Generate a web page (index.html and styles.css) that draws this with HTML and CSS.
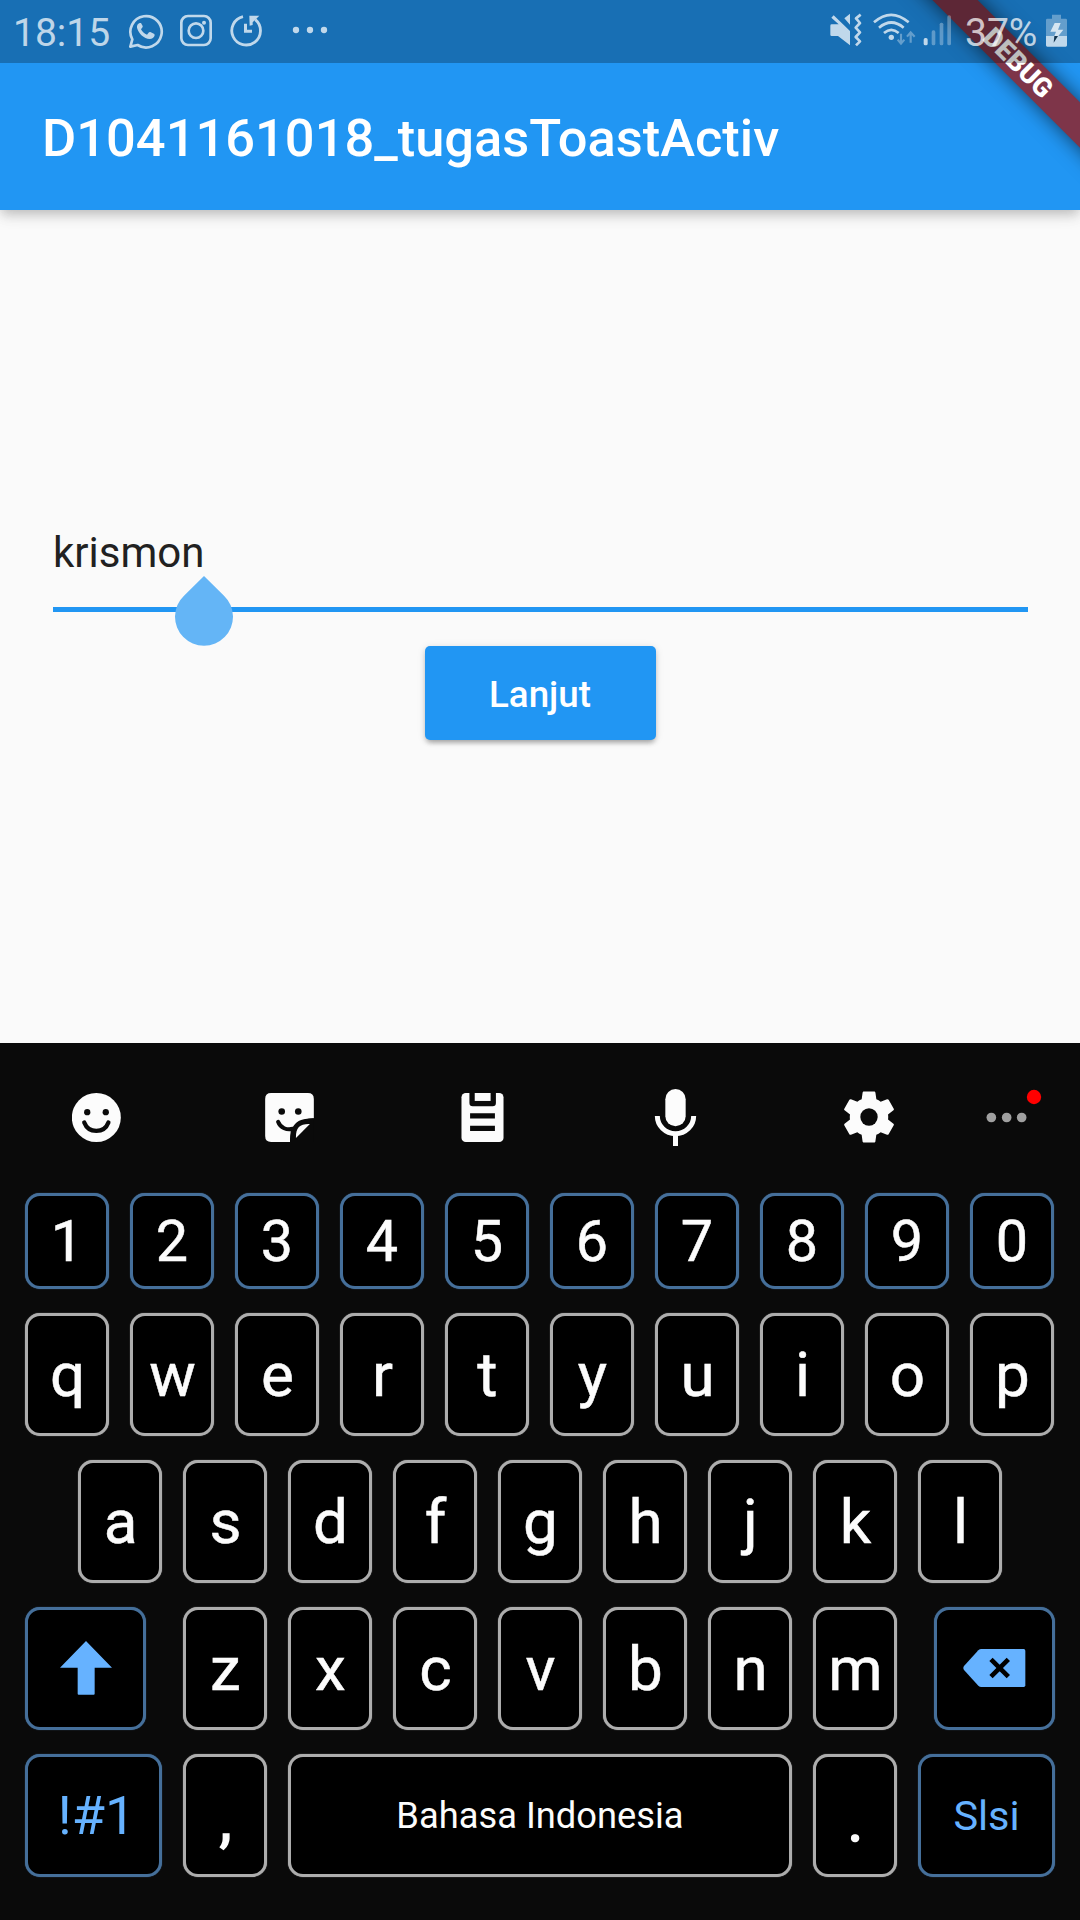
FILE: index.html
```html
<!DOCTYPE html>
<html lang="id">
<head>
<meta charset="utf-8">
<title>D1041161018_tugasToastActiv</title>
<link rel="stylesheet" href="styles.css">
</head>
<body>
<div class="screen">
  <header class="app-bar">
    <h1 class="app-title">D1041161018_tugasToastActiv</h1>
  </header>

  <div class="debug-corner">
    <div class="debug-banner">DEBUG</div>
  </div>

  <div class="status-bar">
    <span class="clock">18:15</span>
    <svg class="whatsapp" width="36" height="36" viewBox="384 39 108 108" fill="none"><path d="M391 140l6-22a47 47 0 1 1 16 17z" stroke="currentColor" stroke-width="8" stroke-linejoin="round"/><path d="M419 69c-6 2-9 8-8 14 4 17 21 33 38 34 7 0 14-4 15-11l-1-4-12-6-4 1-6 7c-8-3-14-9-18-16l5-7v-3l-5-9z" fill="currentColor"/></svg>
    <svg class="instagram" width="33" height="36" viewBox="540 39 99 108" fill="none" stroke="currentColor" stroke-width="8"><rect x="544" y="48" width="88" height="87" rx="20"/><circle cx="588" cy="92" r="22"/><circle cx="612" cy="68" r="6" fill="currentColor" stroke="none"/></svg>
    <svg class="timer" width="34" height="36" viewBox="687 39 102 108" fill="none"><path d="M729 50a43 43 0 1 0 37 9" stroke="currentColor" stroke-width="8.5"/><path d="M748 47h30l-20 20v8l-9 2zM732 71h9v18h15v9h-24z" fill="currentColor"/></svg>
    <svg class="more-notifications" width="36" height="36" viewBox="876 39 108 108" fill="currentColor"><circle cx="888" cy="90" r="9.5"/><circle cx="930" cy="90" r="9.5"/><circle cx="972" cy="90" r="9.5"/></svg>

    <div class="system-icons">
      <svg class="mute" width="35" height="36" viewBox="84 39 105 108" fill="none"><path d="M101 46l-7 7 22 20H95q-4 0-4 4v27q0 4 4 4h19l36 28V93zM133 55l17-14v33z" fill="currentColor"/><path d="M182 44l-14 11 12 14-13 14 13 14-13 14 13 13-12 12" stroke="currentColor" stroke-width="8" stroke-linejoin="round"/></svg>
      <svg class="wifi" width="45" height="36" viewBox="216 39 135 108" fill="none"><g stroke="currentColor" stroke-width="8"><path d="M222 67q51-45 104 0"/><path d="M237 83q37-31 74 0"/><path d="M252 99q22-19 44 0"/></g><circle cx="274" cy="112" r="8" fill="currentColor"/><path d="M303 101v28m-10-10l10 12 10-12M332 128V98m-11 12l11-13 12 13" stroke="currentColor" stroke-width="6.5" opacity=".45"/></svg>
      <svg class="signal" width="30" height="36" viewBox="366 39 90 108" fill="currentColor"><rect x="371" y="114" width="12" height="22" rx="5"/><g opacity=".42"><rect x="395" y="91" width="11" height="45" rx="5"/><rect x="419" y="68" width="11" height="68" rx="5"/><rect x="442" y="46" width="11" height="90" rx="5"/></g></svg>
      <span class="battery-level">37%</span>
      <svg class="battery" width="23" height="36" viewBox="735 39 69 108" fill="currentColor"><path d="M756 44h27v12h14q4 0 4 4v48h-63V60q0-4 4-4h14z" opacity=".45"/><path d="M738 108h63v28q0 4-4 4h-55q-4 0-4-4zM764 69h18l-8 20h16l-15 19h-12l5-13h-17z"/><path class="bolt-tip" d="M763 108h11l-13 20z"/></svg>
    </div>
  </div>

  <main class="content">
    <div class="name-field">
      <span class="name-value">krismon</span>
      <svg class="cursor-handle" width="58" height="70" viewBox="435 229 174 210"><path d="M522 229l60 59a87 87 0 1 1-120 0z" fill="#64b5f6"/></svg>
    </div>
    <button class="next-button" type="button">Lanjut</button>
  </main>

  <section class="keyboard">
    <div class="tools">
      <div class="tool"><svg width="49" height="49" viewBox="96 188 148 148"><circle cx="169.500" cy="262" r="74" fill="#fcfcfc"/><g fill="#0a0a0a"><circle cx="142" cy="246" r="9.500"/><circle cx="198" cy="246" r="9.500"/></g><path d="M133 277c13 34 60 34 73 0" fill="none" stroke="#0a0a0a" stroke-width="13" stroke-linecap="round"/></svg></div>
      <div class="tool"><svg width="49" height="49" viewBox="675 188 147 148"><path d="M693 188h111q18 0 18 18v58c-45 2-71 17-72 72h-57q-18 0-18-18V206q0-18 18-18z" fill="#fcfcfc"/><path d="M714 275c7 19 27 26 45 21" fill="none" stroke="#0a0a0a" stroke-width="12" stroke-linecap="round"/><path d="M822 264c-40 0-56 10-65 31l-5 9-2 32h72z" fill="#0a0a0a"/><path d="M810 282c-29-1-43 9-42 42z" fill="#fcfcfc"/><g fill="#0a0a0a"><circle cx="725" cy="244" r="10"/><circle cx="775" cy="244" r="10"/></g></svg></div>
      <div class="tool"><svg width="43" height="49" viewBox="1263 188 129 148"><rect x="1264" y="188" width="127" height="148" rx="13" fill="#fcfcfc"/><path d="M1288 187h80v31q0 10-10 10h-60q-10 0-10-10zM1290 249h75v16h-75zM1290 287h75v16h-75z" fill="#0a0a0a"/><path d="M1304 188h48v24h-48z" fill="#fcfcfc"/></svg></div>
      <div class="tool"><svg width="43" height="57" viewBox="102 177 129 171"><rect x="136" y="177" width="61" height="112" rx="30.500" fill="#fcfcfc"/><path d="M112 258a54.500 53 0 0 0 109 0M166.500 311v37" fill="none" stroke="#fcfcfc" stroke-width="15"/></svg></div>
      <div class="tool"><svg width="64" height="64" viewBox="0 0 24 24"><path fill="#fcfcfc" d="M19.140 12.940c.04-.3.06-.61.06-.94 0-.32-.02-.64-.07-.94l2.030-1.580c.18-.14.23-.41.12-.61l-1.920-3.320c-.12-.22-.37-.29-.59-.22l-2.390.96c-.5-.38-1.030-.7-1.620-.94l-.36-2.540c-.04-.24-.24-.41-.48-.41h-3.840c-.24 0-.43.17-.47.41l-.36 2.540c-.59.24-1.130.57-1.620.94l-2.390-.96c-.22-.08-.47 0-.59.22L2.740 8.870c-.12.21-.08.47.12.61l2.030 1.580c-.05.3-.09.63-.09.94s.02.64.07.94l-2.030 1.580c-.18.14-.23.41-.12.61l1.920 3.320c.12.22.37.29.59.22l2.390-.96c.5.38 1.030.7 1.620.94l.36 2.540c.05.24.24.41.48.41h3.840c.24 0 .44-.17.47-.41l.36-2.540c.59-.24 1.130-.56 1.620-.94l2.390.96c.22.08.47 0 .59-.22l1.920-3.320c.12-.22.07-.47-.12-.61z"/><circle cx="12" cy="12" r="3.250" fill="#0a0a0a"/></svg></div>
      <div class="tool tool-more"><svg width="56" height="57" viewBox="1098 177 168 171"><g fill="#a0a0a0"><circle cx="1114" cy="262.500" r="14.500"/><circle cx="1160" cy="262.500" r="14.500"/><circle cx="1205" cy="262.500" r="14.500"/></g><circle cx="1242" cy="201" r="21.500" fill="#f00"/></svg></div>
    </div>

    <div class="keys">
      <div class="row row-digits">
        <kbd class="key accent">1</kbd><kbd class="key accent">2</kbd><kbd class="key accent">3</kbd><kbd class="key accent">4</kbd><kbd class="key accent">5</kbd><kbd class="key accent">6</kbd><kbd class="key accent">7</kbd><kbd class="key accent">8</kbd><kbd class="key accent">9</kbd><kbd class="key accent">0</kbd>
      </div>
      <div class="row">
        <kbd class="key">q</kbd><kbd class="key">w</kbd><kbd class="key">e</kbd><kbd class="key">r</kbd><kbd class="key">t</kbd><kbd class="key">y</kbd><kbd class="key">u</kbd><kbd class="key">i</kbd><kbd class="key">o</kbd><kbd class="key">p</kbd>
      </div>
      <div class="row row-home">
        <kbd class="key">a</kbd><kbd class="key">s</kbd><kbd class="key">d</kbd><kbd class="key">f</kbd><kbd class="key">g</kbd><kbd class="key">h</kbd><kbd class="key">j</kbd><kbd class="key">k</kbd><kbd class="key">l</kbd>
      </div>
      <div class="row row-lower">
        <kbd class="key accent wide shift"><svg width="52" height="54" viewBox="178 183 156 162"><path d="M256 183l78 80h-52v78q0 3-3 3h-45q-3 0-3-3v-78h-53z" fill="#66b2ff"/></svg></kbd>
        <kbd class="key">z</kbd><kbd class="key">x</kbd><kbd class="key">c</kbd><kbd class="key">v</kbd><kbd class="key">b</kbd><kbd class="key">n</kbd><kbd class="key">m</kbd>
        <kbd class="key accent wide backspace"><svg width="63" height="38" viewBox="610 207 189 114"><path d="M665 207h127q5 0 5 5v104q0 5-5 5H665q-5 0-9-4l-43-47q-4-6 0-12l43-47q4-4 9-4z" fill="#66b2ff"/><path d="M694 238l52 52m0-52l-52 52" stroke="#000" stroke-width="14"/></svg></kbd>
      </div>
      <div class="row">
        <kbd class="key accent symbols">!#1</kbd><kbd class="key punctuation">,</kbd><kbd class="key space">Bahasa Indonesia</kbd><kbd class="key punctuation">.</kbd><kbd class="key accent done">Slsi</kbd>
      </div>
    </div>
  </section>
</div>
</body>
</html>
```
FILE: styles.css
```css
* { box-sizing: border-box; }

body {
  margin: 0;
  font-family: Roboto, "Liberation Sans", sans-serif;
  background: #fafafa;
}

.screen {
  position: relative;
  display: flex;
  flex-direction: column;
  width: 1080px;
  height: 1920px;
  overflow: hidden;
}

/* App bar */
.app-bar {
  display: flex;
  align-items: center;
  height: 210px;
  padding: 65px 42px 0;
  background: #2196f3;
  box-shadow: 0 5px 10px -2px rgba(0, 0, 0, .16), 0 8px 13px rgba(0, 0, 0, .07), 0 2px 20px rgba(0, 0, 0, .06);
}

.app-title {
  margin: 0;
  color: #fff;
  font-size: 52.45px;
  font-weight: 500;
  line-height: 62px;
  white-space: nowrap;
}

/* Corner ribbon */
.debug-corner {
  position: absolute;
  top: 0;
  right: 0;
  width: 210px;
  height: 210px;
  overflow: hidden;
}

.debug-banner {
  position: absolute;
  left: -2px;
  top: 46.5px;
  width: 300px;
  height: 32px;
  transform: rotate(45deg);
  background: #7e3549;
  box-shadow: 0 0 20px rgba(0, 0, 0, .6);
  color: #fff;
  font-size: 26.8px;
  font-weight: 900;
  line-height: 32px;
  text-align: center;
}

/* Status bar */
.status-bar {
  position: absolute;
  inset: 0 0 auto 0;
  display: flex;
  align-items: flex-start;
  gap: 16px;
  height: 63px;
  padding: 13px 12px 0 13px;
  background: rgba(0, 0, 0, .26);
  color: rgba(255, 255, 255, .73);
}

.clock {
  width: 99px;
  font-size: 39px;
  line-height: 40px;
}

.more-notifications { margin-left: 13px; }

.system-icons {
  display: flex;
  align-items: flex-start;
  margin-left: auto;
}

.wifi { margin-left: 9px; }
.signal { margin-left: 5px; }

.battery-level {
  width: 73px;
  margin: 0 7px 0 13px;
  font-size: 39px;
  line-height: 40px;
  white-space: nowrap;
}

.bolt-tip { fill: #12344f; }

/* Content */
.content {
  display: flex;
  flex-direction: column;
  align-items: center;
  height: 833px;
  padding: 308px 52.5px 0;
}

.name-field {
  position: relative;
  width: 100%;
  height: 94px;
  padding-left: .5px;
  border-bottom: 5px solid #2196f3;
  color: #212121;
  font-size: 42px;
  line-height: 69px;
}

.cursor-handle {
  position: absolute;
  left: 122.5px;
  top: 58px;
}

.next-button {
  width: 231px;
  height: 94px;
  margin-top: 34px;
  padding: 3px 0 0;
  border: 0;
  border-radius: 5px;
  background: #2196f3;
  box-shadow: 0 5px 5px -3px rgba(0, 0, 0, .2), 0 3px 5px rgba(0, 0, 0, .14), 0 1px 8px rgba(0, 0, 0, .1);
  color: #fff;
  font: 500 36.75px/91px Roboto, "Liberation Sans", sans-serif;
}

/* Keyboard */
.keyboard {
  height: 877px;
  background: #0a0a0a;
}

.tools {
  display: grid;
  grid-template-columns: repeat(5, 193px) 115px;
  height: 150px;
  padding-bottom: 2px;
}

.tool {
  display: flex;
  align-items: center;
  justify-content: center;
}

.tool-more { justify-content: flex-start; padding-left: 21px; }

.keys {
  display: flex;
  flex-direction: column;
  gap: 24px;
  padding: 0 25px;
}

.row {
  display: flex;
  gap: 21px;
  height: 123px;
}

.row-digits { height: 96px; }
.row-home { padding-left: 53px; }

.key {
  display: flex;
  align-items: center;
  justify-content: center;
  width: 84px;
  padding: 0 0 0 1px;
  border: 3px solid #adadad;
  border-radius: 15px;
  background: #000;
  box-shadow: 0 0 1px #adadad;
  color: #fcfcfc;
  font-family: inherit;
  font-size: 62px;
  line-height: 1;
  white-space: nowrap;
  -webkit-text-stroke: .5px currentColor;
}

.key.accent {
  border-color: #456f9a;
  box-shadow: 0 0 1px #456f9a;
}

.row-digits .key { padding: 2px 0 0; font-size: 57.5px; }
.key.wide { width: 121px; padding: 0 0 2px; }
.key.shift { margin-right: 16px; }
.key.backspace { margin-left: 16px; }

.key.symbols, .key.done {
  width: 137px;
  padding: 0 0 0 6px;
  color: #66b2ff;
  font-size: 54px;
  -webkit-text-stroke: 0;
}

.key.done { padding: 1px 0 0; font-size: 41.5px; }

.key.space {
  width: 504px;
  padding: 1px 0 0;
  font-size: 36.3px;
  -webkit-text-stroke: 0;
}

.key.punctuation {
  padding-top: 8px;
  -webkit-text-stroke: 1.4px currentColor;
}
```
